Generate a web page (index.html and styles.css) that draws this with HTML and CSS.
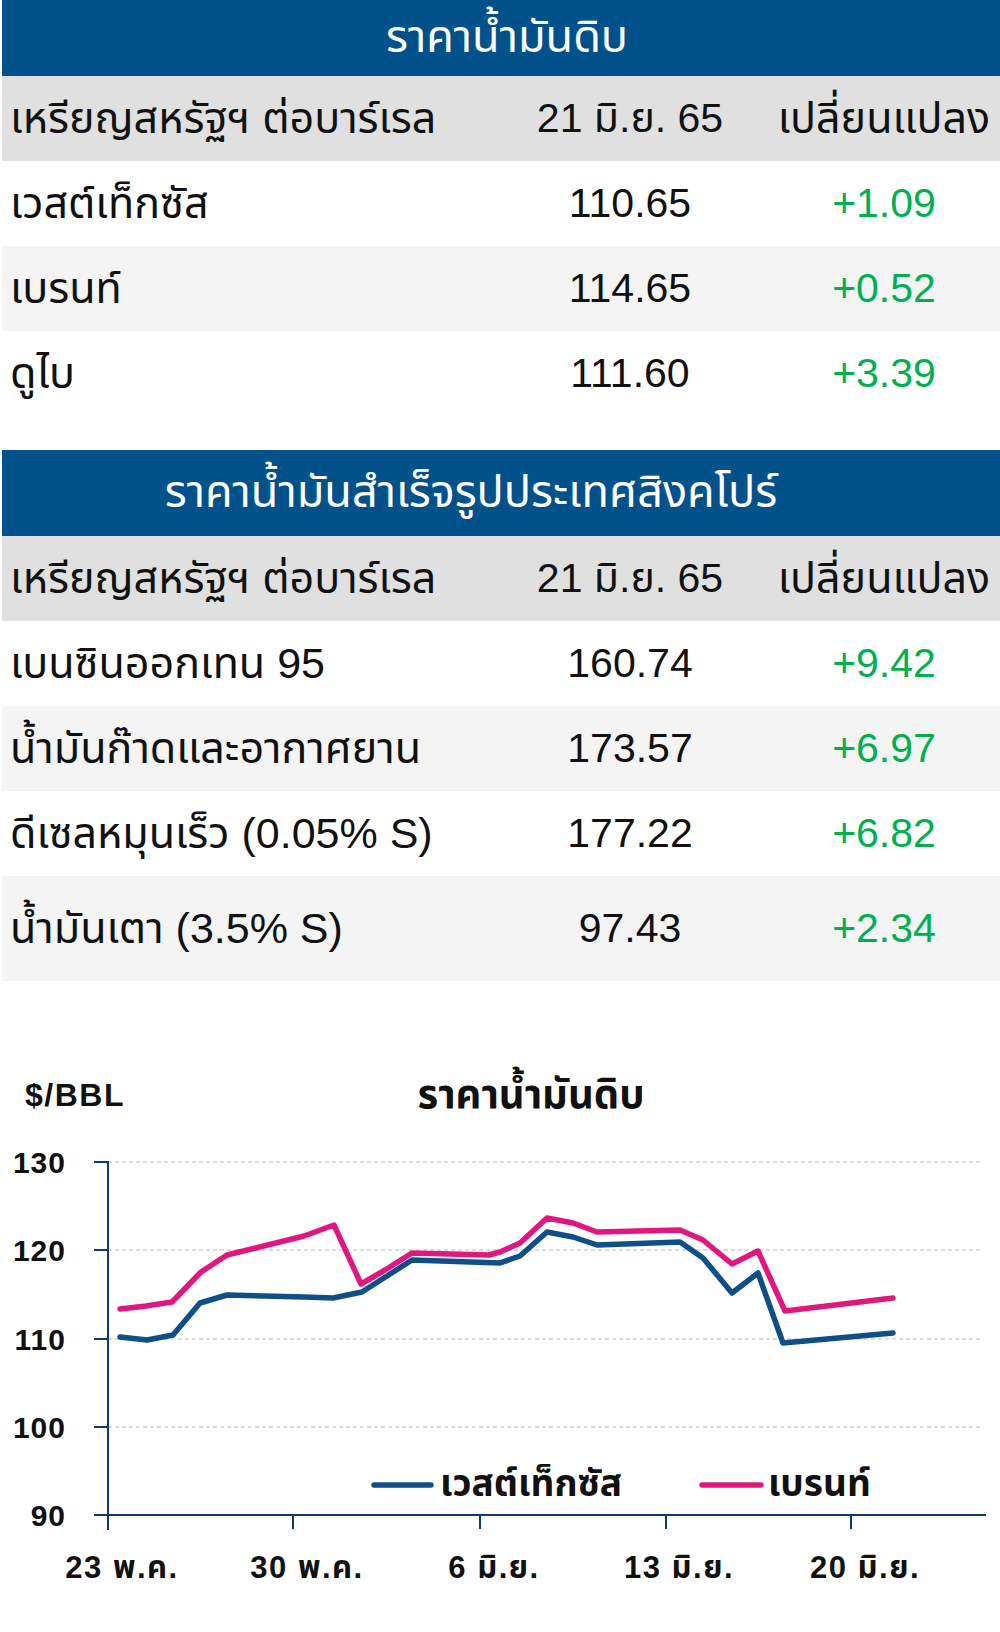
FILE: index.html
```html
<!DOCTYPE html>
<html lang="th">
<head>
<meta charset="utf-8">
<title>ราคาน้ำมัน</title>
<link rel="stylesheet" href="styles.css">
</head>
<body>
<main class="page">
  <section class="tbl first">
    <div class="title t1">ราคาน้ำมันดิบ</div>
    <div class="row head">
      <div class="c1">เหรียญสหรัฐฯ ต่อบาร์เรล</div>
      <div class="c2">21 มิ.ย. 65</div>
      <div class="c3">เปลี่ยนแปลง</div>
    </div>
    <div class="row"><div class="c1">เวสต์เท็กซัส</div><div class="c2">110.65</div><div class="c3 up">+1.09</div></div>
    <div class="row alt"><div class="c1">เบรนท์</div><div class="c2">114.65</div><div class="c3 up">+0.52</div></div>
    <div class="row"><div class="c1">ดูไบ</div><div class="c2">111.60</div><div class="c3 up">+3.39</div></div>
  </section>

  <section class="tbl second">
    <div class="title t2">ราคาน้ำมันสำเร็จรูปประเทศสิงคโปร์</div>
    <div class="row head">
      <div class="c1">เหรียญสหรัฐฯ ต่อบาร์เรล</div>
      <div class="c2">21 มิ.ย. 65</div>
      <div class="c3">เปลี่ยนแปลง</div>
    </div>
    <div class="row"><div class="c1">เบนซินออกเทน 95</div><div class="c2">160.74</div><div class="c3 up">+9.42</div></div>
    <div class="row alt"><div class="c1">น้ำมันก๊าดและอากาศยาน</div><div class="c2">173.57</div><div class="c3 up">+6.97</div></div>
    <div class="row"><div class="c1">ดีเซลหมุนเร็ว (0.05% S)</div><div class="c2">177.22</div><div class="c3 up">+6.82</div></div>
    <div class="row alt tall"><div class="c1">น้ำมันเตา (3.5% S)</div><div class="c2">97.43</div><div class="c3 up">+2.34</div></div>
  </section>

  <section class="chart">
    <svg class="chart-svg" width="1000" height="651" viewBox="0 981 1000 651" xmlns="http://www.w3.org/2000/svg">
      <g class="grid">
        <line x1="108" y1="1162" x2="983" y2="1162"/>
        <line x1="108" y1="1250" x2="983" y2="1250"/>
        <line x1="108" y1="1339" x2="983" y2="1339"/>
        <line x1="108" y1="1427" x2="983" y2="1427"/>
      </g>
      <g class="axis">
        <line x1="108" y1="1161" x2="108" y2="1530"/>
        <line x1="94" y1="1515" x2="986" y2="1515"/>
        <line x1="94" y1="1162" x2="108" y2="1162"/>
        <line x1="94" y1="1250" x2="108" y2="1250"/>
        <line x1="94" y1="1339" x2="108" y2="1339"/>
        <line x1="94" y1="1427" x2="108" y2="1427"/>
        <line x1="293" y1="1515" x2="293" y2="1529"/>
        <line x1="480" y1="1515" x2="480" y2="1529"/>
        <line x1="666" y1="1515" x2="666" y2="1529"/>
        <line x1="851" y1="1515" x2="851" y2="1529"/>
      </g>
      <polyline class="wti" points="120,1337 147,1340 173,1335 200,1303 227,1295 304,1297 333,1298 362,1292 412,1260 500,1263 520,1256 547,1232 573,1237 597,1245 680,1242 703,1258 732,1293 758,1273 783,1343 893,1333"/>
      <polyline class="brent" points="120,1309 146,1306 172,1302 201,1272 227,1255 304,1236 334,1225 361,1284 385,1270 412,1253 489,1255 500,1252 520,1243 547,1218 573,1223 597,1232 680,1230 703,1240 732,1264 758,1251 785,1311 893,1298"/>
      <g class="ylab">
        <text x="66" y="1173">130</text>
        <text x="66" y="1261">120</text>
        <text x="66" y="1350">110</text>
        <text x="66" y="1438">100</text>
        <text x="66" y="1526">90</text>
      </g>
      <g class="xlab">
        <text x="122" y="1578">23 พ.ค.</text>
        <text x="307" y="1578">30 พ.ค.</text>
        <text x="494" y="1578">6 มิ.ย.</text>
        <text x="679" y="1578">13 มิ.ย.</text>
        <text x="865" y="1578">20 มิ.ย.</text>
      </g>
      <text class="unit" x="25" y="1106">$/BBL</text>
      <text class="ctitle" x="531" y="1108">ราคาน้ำมันดิบ</text>
      <line class="leg-wti" x1="374" y1="1485" x2="431" y2="1485"/>
      <text class="legtext" x="440" y="1496">เวสต์เท็กซัส</text>
      <line class="leg-brent" x1="702" y1="1485" x2="761" y2="1485"/>
      <text class="legtext" x="768" y="1496">เบรนท์</text>
    </svg>
  </section>
</main>
</body>
</html>
```

FILE: styles.css
```css
html, body {
  margin: 0;
  padding: 0;
  background: #ffffff;
}

body {
  width: 1000px;
  font-family: "Liberation Sans", "Noto Sans Thai", "Noto Sans Thai Looped", "Loma", "Garuda", "Tlwg Typo", "DejaVu Sans", sans-serif;
  color: #111111;
}

.page {
  display: flex;
  flex-direction: column;
}

.tbl {
  padding-left: 2px;
  display: flex;
  flex-direction: column;
}

.tbl.first {
  height: 417px;
}

.tbl.second {
  margin-top: 33px;
}

.title {
  background: #01518b;
  color: #ffffff;
  font-size: 45px;
  display: flex;
  align-items: center;
  justify-content: center;
}

.t1 {
  height: 76px;
  padding-left: 12px;
}

.t2 {
  height: 86px;
  padding-right: 60px;
}

.row {
  display: grid;
  grid-template-columns: 490px 276px 1fr;
  align-items: center;
  height: 85px;
  font-size: 41px;
  line-height: 1;
  white-space: nowrap;
}

.row.head {
  background: #e0e0e0;
}

.row.alt {
  background: #f4f4f4;
}

.row.tall {
  height: 105px;
}

.c1 {
  padding-left: 8px;
  font-size: 43px;
}

.c2,
.c3 {
  text-align: center;
}

.head .c3 {
  font-size: 43px;
}

.up {
  color: #00b050;
}

.chart {
  height: 651px;
}

.chart-svg {
  display: block;
}

.grid line {
  stroke: #b8b8b8;
  stroke-width: 1;
  stroke-dasharray: 4 3;
}

.axis line {
  stroke: #0d3a73;
  stroke-width: 2;
}

.wti,
.brent {
  fill: none;
  stroke-width: 5.5;
  stroke-linejoin: round;
  stroke-linecap: round;
}

.wti {
  stroke: #0e4f8a;
}

.brent {
  stroke: #e0177f;
}

.leg-wti,
.leg-brent {
  stroke-width: 5.5;
  stroke-linecap: round;
}

.leg-wti {
  stroke: #0e4f8a;
}

.leg-brent {
  stroke: #e0177f;
}

.chart-svg text {
  font-family: "Liberation Sans", "Noto Sans Thai", "Loma", "Garuda", "DejaVu Sans", sans-serif;
  font-weight: 700;
  fill: #111111;
}

.ylab text {
  font-size: 30px;
  text-anchor: end;
  letter-spacing: 1px;
}

.xlab text {
  font-size: 31px;
  text-anchor: middle;
  letter-spacing: 1.5px;
}

.unit {
  font-size: 32px;
  letter-spacing: 1.5px;
}

.ctitle {
  font-size: 40px;
  text-anchor: middle;
}

.legtext {
  font-size: 37px;
}
```
